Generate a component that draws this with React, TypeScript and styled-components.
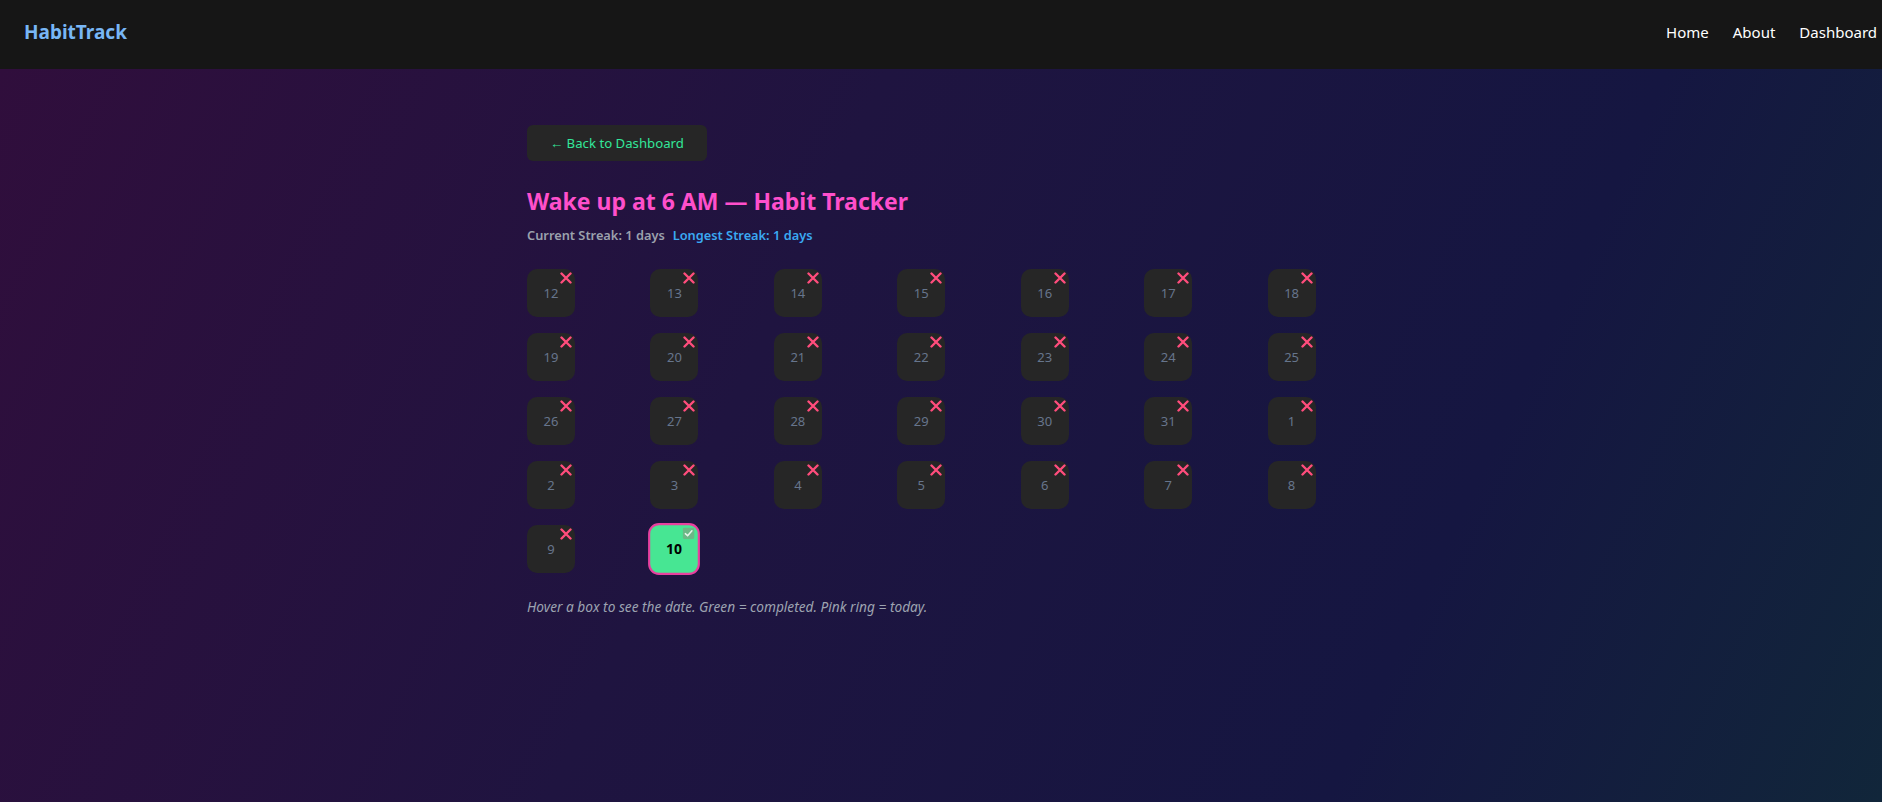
import styled, { createGlobalStyle } from 'styled-components';

const GlobalStyle = createGlobalStyle`
  * { box-sizing: border-box; }
  html, body { margin: 0; padding: 0; }
  body {
    font-family: "Noto Sans", "Open Sans", sans-serif;
    background: #161616;
  }
`;

const Page = styled.div`
  min-height: 100vh;
  display: flex;
  flex-direction: column;
`;

const Header = styled.header`
  height: 69px;
  background: #161616;
  display: flex;
  align-items: center;
  justify-content: space-between;
  padding: 0 5px 5px 24px;
`;

const Logo = styled.div`
  color: #78b6f5;
  font-size: 19px;
  font-weight: 700;
`;

const NavList = styled.ul`
  display: flex;
  list-style: none;
  margin: 0;
  padding: 0;
  gap: 24px;
`;

const NavLink = styled.a`
  color: #ffffff;
  font-size: 15px;
  text-decoration: none;
`;

const Main = styled.main`
  flex: 1;
  background: linear-gradient(115deg, #300e3c 0%, #1f1440 40%, #151641 75%, #11263a 100%);
  padding: 56px 0 80px;
`;

const Container = styled.div`
  width: 828px;
  margin: 0 auto;
`;

const BackButton = styled.button`
  height: 36px;
  padding: 0 23px;
  border: none;
  border-radius: 6px;
  background: #262626;
  color: #33e69a;
  font-family: inherit;
  font-size: 13.2px;
  cursor: pointer;
`;

const Title = styled.h1`
  margin: 24px 0 0;
  font-size: 23px;
  line-height: 32px;
  font-weight: 700;
  color: #ff4fcb;
`;

const StreakRow = styled.div`
  margin-top: 8px;
  display: flex;
  gap: 8px;
  font-size: 12.8px;
  line-height: 20px;
  font-weight: 600;
`;

const Streak = styled.span<{ $tone: 'current' | 'longest' }>`
  color: ${p => (p.$tone === 'current' ? '#9ba1ad' : '#3aa9f2')};
`;

const Grid = styled.div`
  margin-top: 24px;
  width: 848px;
  display: grid;
  grid-template-columns: repeat(7, 1fr);
  column-gap: 16px;
  row-gap: 16px;
`;

const Cell = styled.div<{ $done: boolean }>`
  position: relative;
  width: 48px;
  height: 48px;
  border-radius: 10px;
  display: flex;
  align-items: center;
  justify-content: center;
  font-size: 13px;
  background: ${p => (p.$done ? '#47e693' : '#262626')};
  color: ${p => (p.$done ? '#000000' : '#66758c')};
  font-weight: ${p => (p.$done ? 700 : 400)};
  border: ${p => (p.$done ? '2px solid #e8409f' : 'none')};
  transform: ${p => (p.$done ? 'scale(1.08)' : 'none')};
`;

const Mark = styled.span<{ $done: boolean }>`
  position: absolute;
  top: ${p => (p.$done ? '2px' : '3px')};
  right: ${p => (p.$done ? '2px' : '3px')};
  width: 12px;
  height: 12px;
  display: flex;
`;

const Note = styled.p`
  margin: 24px 0 0;
  font-size: 13.7px;
  line-height: 20px;
  font-style: italic;
  color: #9ca3b0;
`;

const CrossIcon = () => (
  <svg width="12" height="12" viewBox="0 0 12 12">
    <path d="M1.5 1.5 L10.5 10.5 M10.5 1.5 L1.5 10.5" stroke="#ff4d7c" strokeWidth="2.4" strokeLinecap="round" />
  </svg>
);

const CheckIcon = () => (
  <svg width="11" height="11" viewBox="0 0 11 11">
    <rect x="0" y="0" width="11" height="11" rx="2" fill="#6cb886" />
    <path d="M2.5 5.8 L4.6 7.8 L8.6 3.2" stroke="#e8f5ec" strokeWidth="1.4" fill="none" strokeLinecap="round" strokeLinejoin="round" />
  </svg>
);

const days = [
  ...Array.from({ length: 20 }, (_, i) => i + 12),
  ...Array.from({ length: 10 }, (_, i) => i + 1),
];

export default function App() {
  return (
    <Page>
      <GlobalStyle />
      <Header>
        <Logo>HabitTrack</Logo>
        <nav>
          <NavList>
            <li><NavLink href="#">Home</NavLink></li>
            <li><NavLink href="#">About</NavLink></li>
            <li><NavLink href="#">Dashboard</NavLink></li>
          </NavList>
        </nav>
      </Header>
      <Main>
        <Container>
          <BackButton>← Back to Dashboard</BackButton>
          <Title>Wake up at 6 AM — Habit Tracker</Title>
          <StreakRow>
            <Streak $tone="current">Current Streak: 1 days</Streak>
            <Streak $tone="longest">Longest Streak: 1 days</Streak>
          </StreakRow>
          <Grid>
            {days.map((d, i) => {
              const done = i === days.length - 1;
              return (
                <Cell key={i} $done={done}>
                  {d}
                  <Mark $done={done}>{done ? <CheckIcon /> : <CrossIcon />}</Mark>
                </Cell>
              );
            })}
          </Grid>
          <Note>Hover a box to see the date. Green = completed. Pink ring = today.</Note>
        </Container>
      </Main>
    </Page>
  );
}
